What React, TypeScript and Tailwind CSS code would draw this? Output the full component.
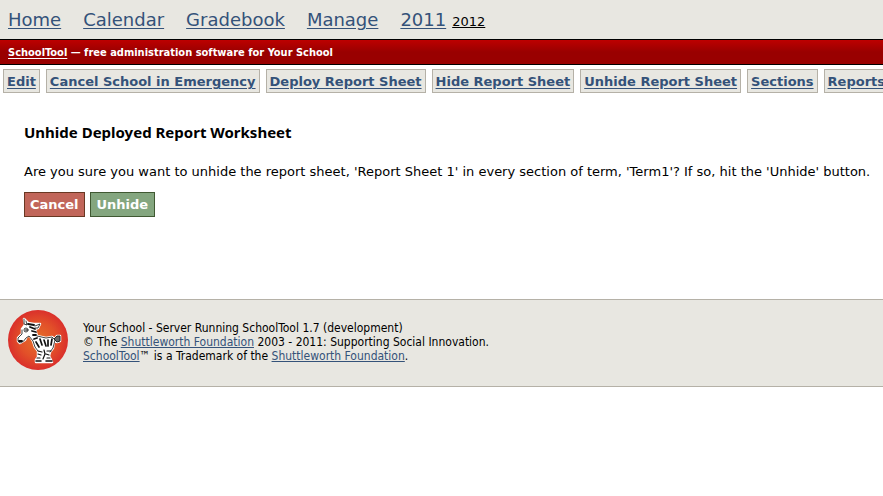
const navLinks = ['Home', 'Calendar', 'Gradebook', 'Manage'];

const actions = [
  'Edit',
  'Cancel School in Emergency',
  'Deploy Report Sheet',
  'Hide Report Sheet',
  'Unhide Report Sheet',
  'Sections',
  'Reports',
];

function ZebraLogo() {
  return (
    <svg viewBox="0 0 60 60" className="size-[60px] shrink-0" role="img" aria-label="SchoolTool">
      <defs>
        <radialGradient id="disc">
          <stop offset="0" stopColor="#e5702a" />
          <stop offset="0.6" stopColor="#e25029" />
          <stop offset="1" stopColor="#da302b" />
        </radialGradient>
      </defs>
      <circle cx="30" cy="30" r="30" fill="url(#disc)" />
      <path
        d="M16 9 L20 13 L26 14 L32 14 L30 18 L27 19 L29 26 L38 28 L44 27 L47 29 L49 26 L52 26 L52 31 L49 32 L46 31 L45 38 L42 42 L41 46 L44 52 L37 52 L28 52 L28 50 L30 47 L30 41 L27 37 L25 31 L22 26 L19 26 L17 30 L12 33 L10 31 L10 28 L14 24 L14 19 L17 15 Z"
        fill="#fff"
        stroke="#fff"
        strokeWidth="2.5"
        strokeLinejoin="round"
      />
      <g fill="none" stroke="#111" strokeLinecap="round" strokeLinejoin="round">
        <path strokeWidth="0.8" d="M16 9 L16 14 L19 15 L18 11 M27 16 L32 14 L30 18 L27 18 M14 20 L14 24 L10 28 Q9 32 12 33 Q16 32 18 28 L21 26 L25 31 L27 37 L30 41 M29 26 L38 28 L44 27 L47 30 L45 38 L42 42" />
        <path strokeWidth="1.8" d="M20 14 L26 15 M22 17 L27 19 M24 21 L28 22 M25 25 L28 25 M26 29 L29 28" />
        <path strokeWidth="1.7" d="M32 29 L34 35 M36 30 L38 36 M40 30 L40 36 M44 29 L43 35 M28 32 L31 37" />
        <path strokeWidth="1.2" d="M30 41 L34 42 M30 44 L33 45 M29 48 L32 48 M36 40 L37 44 L35 49 M39 41 L43 41 M38 44 L41 45 M39 48 L42 48" />
        <path strokeWidth="1.6" d="M28 51 L33 51 M38 51 L44 51" />
        <circle cx="18" cy="20" r="2" strokeWidth="0.8" />
        <circle cx="18" cy="20" r="0.6" fill="#111" strokeWidth="0.4" />
        <path strokeWidth="1.8" d="M11 31 L14 31" />
      </g>
      <path d="M46 29 L49 26 L52 26 L52 31 L49 32 Z" fill="#666" stroke="#222" />
    </svg>
  );
}

export default function App() {
  return (
    <div className="w-full overflow-hidden bg-white font-['DejaVu_Sans',sans-serif] text-[13px] text-black">
      <header>
        <nav className="flex h-[39px] items-baseline bg-[#e8e7e1] px-2 pt-[6px] text-lg text-[#345279]">
          <div className="flex gap-[22px] leading-7">
            {navLinks.map((label) => (
              <a key={label} href="#" className="underline underline-offset-2">
                {label}
              </a>
            ))}
            <a href="#" className="underline underline-offset-2">2011</a>
          </div>
          <a href="#" className="ml-[6px] text-[13px] text-black underline">2012</a>
        </nav>
        <div className="h-[26px] border-y border-black bg-linear-to-b from-[#bd0000] to-[#990000] to-50% px-2 font-['DejaVu_Sans_Condensed','DejaVu_Sans',sans-serif] text-[11px] leading-[26px] font-bold whitespace-nowrap text-white">
          <a href="#" className="underline underline-offset-2">SchoolTool</a> — free administration software for Your School
        </div>
      </header>

      <nav className="flex gap-[6px] pt-1 pl-[3px] font-bold whitespace-nowrap text-[#345279]">
        {actions.map((label) => (
          <a key={label} href="#" className="h-6 shrink-0 border border-[#b5b1a7] bg-[#e8e7e1] px-[3px] leading-6 underline underline-offset-2">
            {label}
          </a>
        ))}
      </nav>

      <main className="px-6 pt-[27px]">
        <h1 className="font-['Noto_Sans',sans-serif] text-[15px] leading-6 font-bold">Unhide Deployed Report Worksheet</h1>
        <p className="mt-[18px] leading-5 whitespace-nowrap">
          Are you sure you want to unhide the report sheet, 'Report Sheet 1' in every section of term, 'Term1'? If so, hit the 'Unhide' button.
        </p>
        <div className="mt-[10px] flex gap-[5px] leading-[23px] font-bold text-white">
          <button type="button" className="border border-[#693823] bg-[#c1665a] px-[5px]">Cancel</button>
          <button type="button" className="border border-[#405932] bg-[#84a67f] px-[6px]">Unhide</button>
        </div>
      </main>

      <footer className="mt-[82px] flex gap-[15px] border-y border-[#b5b1a7] bg-[#e8e7e1] px-2 pt-[10px] pb-4 font-['DejaVu_Sans_Condensed','DejaVu_Sans',sans-serif] text-xs leading-[14px]">
        <ZebraLogo />
        <div className="pt-[11px]">
          <p>Your School - Server Running SchoolTool 1.7 (development)</p>
          <p>
            © The <a href="#" className="text-[#345279] underline">Shuttleworth Foundation</a> 2003 - 2011: Supporting Social Innovation.
          </p>
          <p>
            <a href="#" className="text-[#345279] underline">SchoolTool</a>™ is a Trademark of the <a href="#" className="text-[#345279] underline">Shuttleworth Foundation</a>.
          </p>
        </div>
      </footer>
    </div>
  );
}
